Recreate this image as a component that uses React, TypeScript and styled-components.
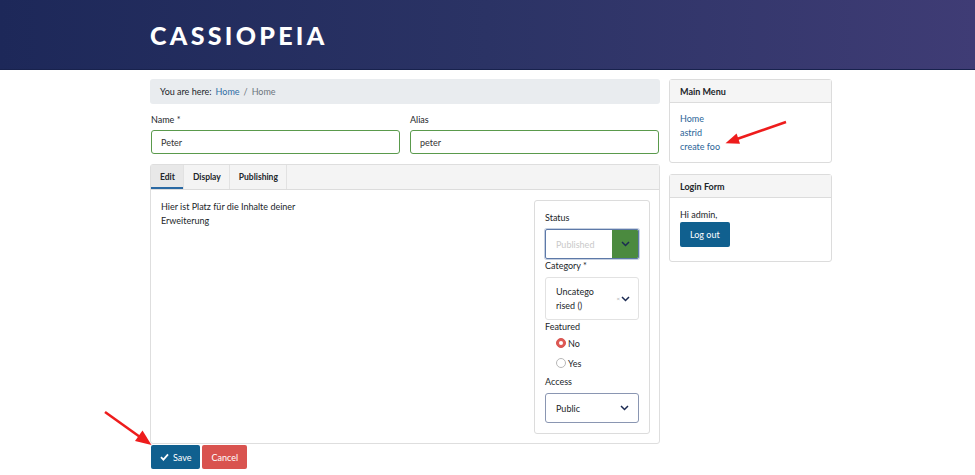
import React from 'react';
import styled, { createGlobalStyle } from 'styled-components';

const Global = createGlobalStyle`
  html, body { margin: 0; padding: 0; background: #fff; }
  body { font-family: Lato, "Noto Sans", sans-serif; font-size: 9px; color: #22262a; }
  * { box-sizing: border-box; }
`;

const Page = styled.div`
  position: relative;
  width: 975px;
  height: 475px;
  overflow: hidden;
`;

const Header = styled.header`
  height: 70px;
  background: linear-gradient(90deg, #1d2859 0%, #2b3365 50%, #3f3c75 100%);
  border-bottom: 1px solid #18224d;
  padding-left: 150px;
  display: flex;
  align-items: center;
`;

const Logo = styled.div`
  font-family: Lato, sans-serif;
  font-weight: 900;
  font-size: 25px;
  letter-spacing: 3.3px;
  color: #fff;
`;

const Body = styled.div`
  display: grid;
  grid-template-columns: 510px 163px;
  column-gap: 9px;
  padding: 9px 0 0 150px;
  align-items: start;
`;

const Main = styled.main`
  display: flex;
  flex-direction: column;
`;

const Breadcrumb = styled.nav`
  height: 25px;
  background: #e9ecef;
  border-radius: 3px;
  padding-left: 10px;
  display: flex;
  align-items: center;
  gap: 4px;
  color: #22262a;
`;

const Crumb = styled.span<{ $link?: boolean }>`
  color: ${p => (p.$link ? '#2f6ea6' : '#6c757d')};
`;

const FieldRow = styled.div`
  display: grid;
  grid-template-columns: 1fr 1fr;
  column-gap: 10px;
  padding: 0 1px;
  margin-top: 10px;
`;

const Field = styled.div`
  display: flex;
  flex-direction: column;
`;

const Label = styled.label`
  line-height: 12px;
  height: 12px;
  margin-bottom: 4px;
`;

const Input = styled.div`
  height: 24px;
  border: 1px solid #5a9a4c;
  border-radius: 3px;
  padding-left: 9px;
  display: flex;
  align-items: center;
  color: #333;
`;

const Tabs = styled.section`
  margin-top: 10px;
  border: 1px solid #dedede;
  border-radius: 3px;
`;

const TabBar = styled.div`
  height: 25px;
  background: #f4f4f4;
  border-bottom: 1px solid #dcdcdc;
  display: flex;
`;

const Tab = styled.div<{ $active?: boolean }>`
  padding: 0 8px 0 9px;
  display: flex;
  align-items: center;
  font-weight: 700;
  font-size: 8.5px;
  color: #22262a;
  border-right: 1px solid #e2e2e2;
  background: ${p => (p.$active ? '#e8e8e8' : 'transparent')};
  box-shadow: ${p => (p.$active ? 'inset 0 -2px 0 #2a69a3' : 'none')};
`;

const TabContent = styled.div`
  display: grid;
  grid-template-columns: 1fr 116px;
  padding: 10px 9px 9px 10px;
`;

const Intro = styled.p`
  margin: 0;
  max-width: 140px;
  line-height: 14px;
`;

const Fieldset = styled.div`
  border: 1px solid #dcdcdc;
  border-radius: 3px;
  padding: 11px 10px 10px 10px;
  display: flex;
  flex-direction: column;
`;

const SideLabel = styled.div<{ $gap?: number; $after?: number }>`
  line-height: 12px;
  height: 12px;
  margin-top: ${p => p.$gap ?? 0}px;
  margin-bottom: ${p => p.$after ?? 5}px;
`;

const StatusSelect = styled.div`
  height: 30px;
  display: flex;
  border: 1px solid #5d79a8;
  border-radius: 2px;
  box-shadow: 0 0 0 1px rgba(93, 121, 168, 0.35);
  overflow: hidden;
`;

const StatusText = styled.div`
  flex: 1;
  display: flex;
  align-items: center;
  padding-left: 10px;
  color: #c9c9c9;
`;

const StatusButton = styled.div`
  width: 26px;
  background: #4b8a3f;
  display: flex;
  align-items: center;
  justify-content: center;
`;

const CatSelect = styled.div`
  height: 43px;
  border: 1px solid #e2e2e2;
  border-radius: 3px;
  display: flex;
  align-items: center;
  padding: 0 8px 0 10px;
`;

const CatText = styled.div`
  flex: 0 0 40px;
  line-height: 14px;
  word-break: break-all;
`;

const Clear = styled.span`
  color: #a8a8a8;
  font-size: 6px;
  margin: 0 1px 0 auto;
`;

const RadioRow = styled.div`
  height: 20px;
  display: flex;
  align-items: center;
  padding-left: 11px;
  gap: 2px;
`;

const Radio = styled.span<{ $checked?: boolean }>`
  width: 10px;
  height: 10px;
  border-radius: 50%;
  border: 1px solid ${p => (p.$checked ? '#d9534f' : '#b8b8b8')};
  background: ${p => (p.$checked ? '#de5a55' : '#fff')};
  display: flex;
  align-items: center;
  justify-content: center;
  &::after {
    content: '';
    width: 4px;
    height: 4px;
    border-radius: 50%;
    background: ${p => (p.$checked ? '#fff' : 'transparent')};
  }
`;

const AccessSelect = styled.div`
  height: 30px;
  border: 1px solid #8a96b2;
  border-radius: 3px;
  display: flex;
  align-items: center;
  justify-content: space-between;
  padding: 0 9px 0 10px;
`;

const Actions = styled.div`
  display: flex;
  gap: 2px;
  margin-top: 1px;
  padding-left: 1px;
`;

const Button = styled.button<{ $variant: 'primary' | 'danger' }>`
  height: 24px;
  border: none;
  border-radius: 2px;
  padding: 0 9px;
  font: inherit;
  color: #fff;
  display: flex;
  align-items: center;
  gap: 4px;
  background: ${p => (p.$variant === 'primary' ? '#10608f' : '#d9534f')};
`;

const Sidebar = styled.aside`
  display: flex;
  flex-direction: column;
  gap: 11px;
`;

const Card = styled.div`
  border: 1px solid #dcdcdc;
  border-radius: 3px;
`;

const CardHeader = styled.div`
  height: 23px;
  background: #f5f5f5;
  border-bottom: 1px solid #dcdcdc;
  padding-left: 10px;
  display: flex;
  align-items: center;
  font-weight: 700;
`;

const CardBody = styled.div<{ $pad: string }>`
  padding: ${p => p.$pad};
  display: flex;
  flex-direction: column;
  align-items: flex-start;
  line-height: 14px;
`;

const MenuLink = styled.a`
  color: #2a6497;
  text-decoration: none;
`;

const LogoutButton = styled.button`
  height: 25px;
  border: none;
  border-radius: 2px;
  padding: 0 10px;
  background: #10608f;
  color: #fff;
  font: inherit;
`;

const Overlay = styled.svg`
  position: absolute;
  top: 0;
  left: 0;
  pointer-events: none;
`;

const Chevron = ({ color = '#1b2a52' }: { color?: string }) => (
  <svg width="9" height="6" viewBox="0 0 9 6">
    <path d="M1 1 L4.5 4.5 L8 1" fill="none" stroke={color} strokeWidth="1.5" />
  </svg>
);

export default function App() {
  return (
    <Page>
      <Global />
      <Header>
        <Logo>CASSIOPEIA</Logo>
      </Header>
      <Body>
        <Main>
          <Breadcrumb>
            <span>You are here:</span>
            <Crumb $link>Home</Crumb>
            <Crumb>/</Crumb>
            <Crumb>Home</Crumb>
          </Breadcrumb>
          <FieldRow>
            <Field>
              <Label>Name *</Label>
              <Input>Peter</Input>
            </Field>
            <Field>
              <Label>Alias</Label>
              <Input>peter</Input>
            </Field>
          </FieldRow>
          <Tabs>
            <TabBar>
              <Tab $active>Edit</Tab>
              <Tab>Display</Tab>
              <Tab>Publishing</Tab>
            </TabBar>
            <TabContent>
              <div>
                <Intro>Hier ist Platz für die Inhalte deiner Erweiterung</Intro>
              </div>
              <Fieldset>
                <SideLabel>Status</SideLabel>
                <StatusSelect>
                  <StatusText>Published</StatusText>
                  <StatusButton>
                    <Chevron />
                  </StatusButton>
                </StatusSelect>
                <SideLabel $gap={1}>Category *</SideLabel>
                <CatSelect>
                  <CatText>Uncategorised ()</CatText>
                  <Clear>×</Clear>
                  <Chevron />
                </CatSelect>
                <SideLabel $gap={1} $after={0}>Featured</SideLabel>
                <RadioRow>
                  <Radio $checked />
                  <span>No</span>
                </RadioRow>
                <RadioRow>
                  <Radio />
                  <span>Yes</span>
                </RadioRow>
                <SideLabel $gap={3}>Access</SideLabel>
                <AccessSelect>
                  <span>Public</span>
                  <Chevron />
                </AccessSelect>
              </Fieldset>
            </TabContent>
          </Tabs>
          <Actions>
            <Button $variant="primary">
              <svg width="9" height="8" viewBox="0 0 9 8">
                <path d="M1 4.2 L3.4 6.6 L8 1.4" fill="none" stroke="#fff" strokeWidth="1.8" />
              </svg>
              Save
            </Button>
            <Button $variant="danger">Cancel</Button>
          </Actions>
        </Main>
        <Sidebar>
          <Card>
            <CardHeader>Main Menu</CardHeader>
            <CardBody $pad="9px 10px 8px">
              <MenuLink>Home</MenuLink>
              <MenuLink>astrid</MenuLink>
              <MenuLink>create foo</MenuLink>
            </CardBody>
          </Card>
          <Card>
            <CardHeader>Login Form</CardHeader>
            <CardBody $pad="10px 10px 14px">
              <span>Hi admin,</span>
              <LogoutButton>Log out</LogoutButton>
            </CardBody>
          </Card>
        </Sidebar>
      </Body>
      <Overlay width="975" height="475" viewBox="0 0 975 475">
        <line x1="786" y1="122" x2="737" y2="139" stroke="#ee1c1c" strokeWidth="2.5" />
        <polygon points="725.5,143.3 740,143.8 736.6,133.6" fill="#ee1c1c" />
        <line x1="105" y1="412" x2="140" y2="437" stroke="#ee1c1c" strokeWidth="2.5" />
        <polygon points="151.5,445 135,441 142.5,430.5" fill="#ee1c1c" />
      </Overlay>
    </Page>
  );
}
